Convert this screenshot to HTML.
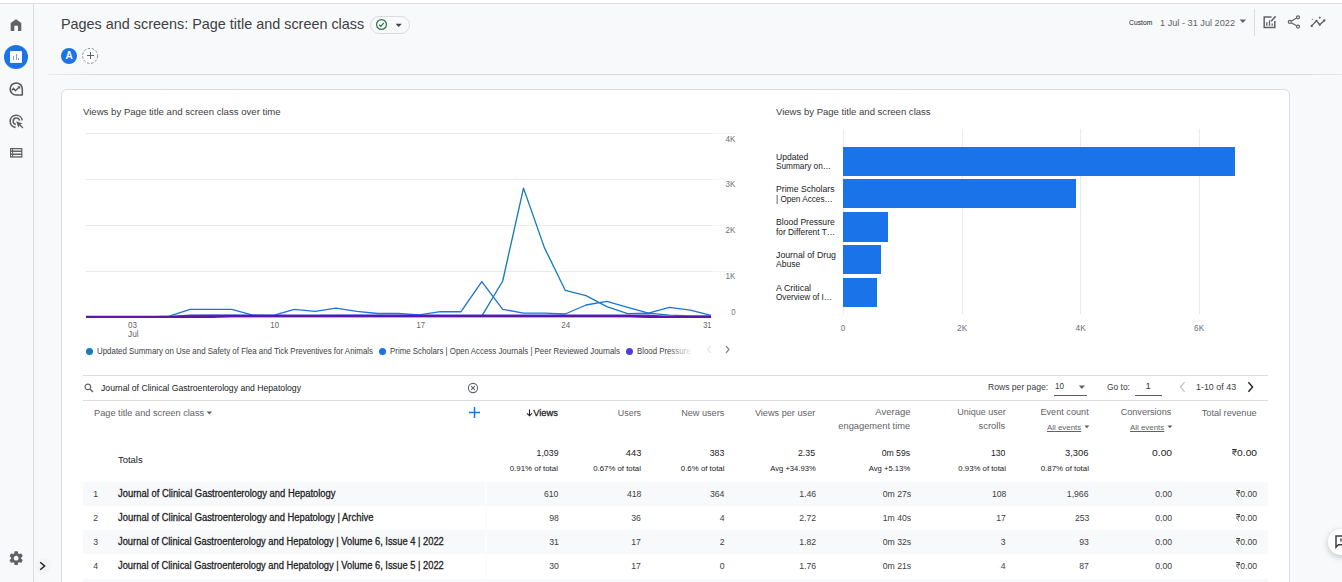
<!DOCTYPE html>
<html>
<head>
<meta charset="utf-8">
<title>Analytics</title>
<style>
*{box-sizing:border-box;margin:0;padding:0}
html,body{width:1342px;height:582px;overflow:hidden;background:#f8f9fa;font-family:"Liberation Sans",sans-serif;color:#3c4043}
.abs{position:absolute}
.t{position:absolute;white-space:nowrap;line-height:1;transform-origin:0 50%}
.r{position:absolute;white-space:nowrap;line-height:1;text-align:right;transform-origin:100% 50%}
#topstrip{left:0;top:0;width:1342px;height:3px;background:#fff}
#topline{left:0;top:3px;width:1342px;height:1px;background:#dadce0}
#nav{left:0;top:4px;width:1342px;height:3px;background:linear-gradient(#fbfbfc,#f8f9fa)}
#navline{left:33px;top:4px;width:1px;height:578px;background:#dadce0}
#hrule{left:48px;top:74px;width:1294px;height:1px;background:linear-gradient(90deg,#eceef0 0,#d6d8db 50px,#d6d8db 1246px,#e6e8ea 1294px)}
#card{left:61px;top:89px;width:1229px;height:520px;background:#fff;border:1px solid #dadce0;border-radius:6px}
.grid{position:absolute;background:#e8eaed}
.row{position:absolute;left:83px;width:1185px;height:24px}
.row.sh{background:#f8f9fa}
.rl{position:absolute;left:83px;width:1185px;height:1px;background:#e8eaed}
</style>
</head>
<body>
<div class="abs" id="topstrip"></div>
<div class="abs" id="topline"></div>
<div class="abs" id="nav"></div>
<div class="abs" id="navline"></div>
<div class="abs" id="hrule"></div>
<div class="abs" id="card"></div>

<!-- HEADER -->
<div id="hdr">
<div class="t" style="left:61.20px;top:17.37px;font-size:14.8px;color:#3c4043;transform:scaleX(0.9726);transform-origin:0 50%;">Pages and screens: Page title and screen class</div>
<div class="abs" style="left:370px;top:16px;width:40px;height:18px;border:1px solid #dadce0;border-radius:9px;background:#f8f9fa"></div>
<svg class="abs" style="left:375px;top:18px" width="13" height="13" viewBox="0 0 13 13"><circle cx="6.5" cy="6.5" r="4.9" fill="none" stroke="#2f7046" stroke-width="1.2"/><path d="M4.1 6.7 L5.8 8.3 L8.9 4.9" fill="none" stroke="#2f7046" stroke-width="1.2"/></svg>
<svg class="abs" style="left:395px;top:23px" width="8" height="5" viewBox="0 0 8 5"><path d="M0.6 0.8 H6.8 L3.7 4 Z" fill="#3c4043"/></svg>
<div class="abs" style="left:61px;top:48px;width:16px;height:16px;border-radius:8px;background:#1a73e8"></div>
<div class="t" style="left:65.38px;top:50.63px;font-size:10px;color:#fff;font-weight:700;">A</div>
<svg class="abs" style="left:81px;top:47px" width="18" height="18" viewBox="0 0 18 18"><circle cx="9.050" cy="8.900" r="7.500" fill="#fcfcfd" stroke="#8a8d91" stroke-width="1" stroke-dasharray="2.500 1.600"/></svg>
<div class="abs" style="left:90px;top:52px;width:1px;height:7px;background:#5f6368"></div><div class="abs" style="left:87px;top:55px;width:7px;height:1px;background:#5f6368"></div>
<div class="t" style="left:1128.70px;top:18.87px;font-size:7px;color:#202124;transform:scaleX(0.9658);transform-origin:0 50%;">Custom</div>
<div class="t" style="left:1159.60px;top:17.56px;font-size:9.5px;color:#5f6368;transform:scaleX(0.9660);transform-origin:0 50%;">1 Jul - 31 Jul 2022</div>
<svg class="abs" style="left:1239px;top:19px" width="8" height="5" viewBox="0 0 8 5"><path d="M0.6 0.6 H7 L3.8 4 Z" fill="#5f6368"/></svg>
<div class="abs" style="left:1254px;top:9px;width:1px;height:27px;background:#dadce0"></div>
<svg class="abs" style="left:1262px;top:14px" width="16" height="16" viewBox="0 0 16 16"><path d="M9.5 3 H2.2 V13.6 H12.8 V7" fill="none" stroke="#5f6368" stroke-width="1.5"/><path d="M4.8 11.8 V8.2 M7.5 11.8 V6.2 M10.2 11.8 V9.4" stroke="#5f6368" stroke-width="1.3" fill="none"/><path d="M9.2 7.2 L13.6 2.2" stroke="#5f6368" stroke-width="1.6" fill="none"/></svg>
<svg class="abs" style="left:1286px;top:14px" width="16" height="16" viewBox="0 0 16 16"><path d="M10.600 4.100 L5.200 7.200 M5.200 8.700 L10.600 11.800" fill="none" stroke="#5f6368" stroke-width="1.200"/><circle cx="12" cy="3.300" r="1.500" fill="none" stroke="#5f6368" stroke-width="1.200"/><circle cx="3.800" cy="7.900" r="1.500" fill="none" stroke="#5f6368" stroke-width="1.200"/><circle cx="12" cy="12.600" r="1.500" fill="none" stroke="#5f6368" stroke-width="1.200"/></svg>
<svg class="abs" style="left:1309px;top:15px" width="18" height="14" viewBox="0 0 18 14"><path d="M2.700 10.900 L7.500 5.800 L10.800 9.700 L15.200 5.500" fill="none" stroke="#5f6368" stroke-width="1.300"/><circle cx="2.700" cy="10.900" r="1.200" fill="#5f6368"/><circle cx="7.500" cy="5.800" r="1.100" fill="#5f6368"/><circle cx="10.800" cy="9.700" r="1.100" fill="#5f6368"/><circle cx="15.200" cy="5.500" r="1.200" fill="#5f6368"/><path d="M10.800 1.300 l.5 1 1 .5 -1 .5 -.5 1 -.5 -1 -1 -.5 1 -.5z" fill="#5f6368"/><circle cx="3.300" cy="4.300" r="0.600" fill="#5f6368"/></svg>
</div><!--/hdr-->
<!-- NAV ICONS -->
<div id="navicons">
<svg class="abs" style="left:10px;top:19px" width="12" height="12" viewBox="0 0 12 12"><path d="M6 0.200 L0.700 4.100 V11.900 H4.300 V6.800 H8 V11.900 H11.300 V4.100 Z" fill="#5f6368"/></svg>
<div class="abs" style="left:4.200px;top:45.100px;width:23.800px;height:23.800px;border-radius:12px;background:#1a73e8"></div>
<div class="abs" style="left:9.700px;top:50.900px;width:12.500px;height:12.400px;border-radius:1px;background:#fff"></div>
<div class="abs" style="left:13px;top:55.700px;width:1px;height:4.200px;background:#7e9fe0"></div><div class="abs" style="left:16px;top:53.800px;width:1px;height:6.100px;background:#7e9fe0"></div><div class="abs" style="left:18.400px;top:58px;width:1px;height:1.800px;background:#7e9fe0"></div>
<svg class="abs" style="left:9px;top:82px" width="15" height="15" viewBox="0 0 15 15"><path d="M13.300 13 H7.200 A6.050 6.050 0 1 1 13.300 6.900 Z" fill="none" stroke="#56595d" stroke-width="1.550" stroke-linejoin="round"/><path d="M2.800 8.400 L4.500 6.400 L6.400 8.700 L9.800 5.400" fill="none" stroke="#56595d" stroke-width="1.400"/><path d="M8.300 4.300 H11.200 V7.200 Z" fill="#56595d"/></svg>
<svg class="abs" style="left:9px;top:113.600px" width="16" height="16" viewBox="0 0 16 16"><path d="M13.3 6.4 A6.1 6.1 0 1 0 6.6 13.4" fill="none" stroke="#5f6368" stroke-width="1.600"/><path d="M10.5 6.6 A3.2 3.2 0 1 0 6.8 10.4" fill="none" stroke="#5f6368" stroke-width="1.600"/><path d="M7.2 7.2 L13.6 9.4 L11.4 10.6 L14.4 13.6 L13.5 14.5 L10.5 11.5 L9.3 13.7 Z" fill="#5f6368"/></svg>
<svg class="abs" style="left:10px;top:148px" width="13" height="10" viewBox="0 0 13 10"><rect x="0" y="0" width="12.4" height="9.6" fill="#5f6368"/><path d="M3.2 1.2 H11.2 V2.6 H3.2Z M3.2 4 H11.2 V5.4 H3.2Z M3.2 6.9 H11.2 V8.3 H3.2Z" fill="#f8f9fa"/><path d="M1.1 1.2 H2.1 V2.6 H1.1Z M1.1 4 H2.1 V5.4 H1.1Z M1.1 6.9 H2.1 V8.3 H1.1Z" fill="#f8f9fa"/></svg>
<svg class="abs" style="left:7.950px;top:549.600px" width="16.300" height="16.300" viewBox="0 0 24 24"><path d="M19.43 12.98c.04-.32.07-.64.07-.98s-.03-.66-.07-.98l2.11-1.65c.19-.15.24-.42.12-.64l-2-3.46c-.12-.22-.39-.3-.61-.22l-2.49 1c-.52-.4-1.08-.73-1.69-.98l-.38-2.65C14.46 2.18 14.25 2 14 2h-4c-.25 0-.46.18-.49.42l-.38 2.65c-.61.25-1.17.59-1.69.98l-2.49-1c-.23-.09-.49 0-.61.22l-2 3.46c-.13.22-.07.49.12.64l2.11 1.65c-.04.32-.07.65-.07.98s.03.66.07.98l-2.11 1.65c-.19.15-.24.42-.12.64l2 3.46c.12.22.39.3.61.22l2.49-1c.52.4 1.08.73 1.69.98l.38 2.65c.03.24.24.42.49.42h4c.25 0 .46-.18.49-.42l.38-2.65c.61-.25 1.17-.59 1.69-.98l2.49 1c.23.09.49 0 .61-.22l2-3.46c.12-.22.07-.49-.12-.64l-2.11-1.65zM12 15.5c-1.93 0-3.500-1.57-3.500-3.500s1.570-3.500 3.500-3.500 3.500 1.570 3.500 3.500-1.570 3.500-3.500 3.500z" fill="#5f6368"/></svg>
<div class="abs" style="left:34.500px;top:558px;width:16px;height:16px;border-radius:8px;background:#f3f4f6"></div>
<svg class="abs" style="left:38px;top:561px" width="9" height="10" viewBox="0 0 9 10"><path d="M2.2 1.2 L6.600 5 L2.2 8.800" fill="none" stroke="#202124" stroke-width="1.5"/></svg>
<div class="abs" style="left:1328px;top:529px;width:26px;height:26px;border-radius:13px;background:#fff;box-shadow:0 2px 6px rgba(60,64,67,.3)"></div>
<svg class="abs" style="left:1335px;top:535px" width="8" height="14" viewBox="0 0 8 14"><path d="M1 1 H8 V9.800 H3.400 L1 12.200 Z" fill="none" stroke="#3c4043" stroke-width="1.5"/><path d="M6 3.500 V6.500" stroke="#3c4043" stroke-width="1.400"/></svg>
</div><!--/navicons-->
<!-- LINE CHART -->
<div id="linechart">
<div class="t" style="left:83.00px;top:106.97px;font-size:9.6px;color:#3c4043;">Views by Page title and screen class over time</div>
<div class="grid" style="left:86px;top:133px;width:626px;height:1px"></div>
<div class="grid" style="left:712px;top:133px;width:24px;height:1px;background:#f3f4f5"></div>
<div class="grid" style="left:86px;top:179px;width:626px;height:1px"></div>
<div class="grid" style="left:712px;top:179px;width:24px;height:1px;background:#f3f4f5"></div>
<div class="grid" style="left:86px;top:225px;width:626px;height:1px"></div>
<div class="grid" style="left:712px;top:225px;width:24px;height:1px;background:#f3f4f5"></div>
<div class="grid" style="left:86px;top:271px;width:626px;height:1px"></div>
<div class="grid" style="left:712px;top:271px;width:24px;height:1px;background:#f3f4f5"></div>
<div class="grid" style="left:86px;top:317px;width:626px;height:1px;background:#dadce0"></div>
<div class="t" style="left:725.15px;top:135.09px;font-size:8.4px;color:#6b6f73;transform:scaleX(0.9561);transform-origin:100% 50%;">4K</div>
<div class="t" style="left:725.15px;top:180.19px;font-size:8.4px;color:#6b6f73;transform:scaleX(0.9561);transform-origin:100% 50%;">3K</div>
<div class="t" style="left:725.15px;top:225.99px;font-size:8.4px;color:#6b6f73;transform:scaleX(0.9561);transform-origin:100% 50%;">2K</div>
<div class="t" style="left:725.15px;top:271.69px;font-size:8.4px;color:#6b6f73;transform:scaleX(0.9561);transform-origin:100% 50%;">1K</div>
<div class="t" style="left:730.53px;top:308.09px;font-size:8.4px;color:#6b6f73;transform:scaleX(0.9204);transform-origin:100% 50%;">0</div>
<div class="t" style="left:128.40px;top:321.49px;font-size:8.4px;color:#5f6368;transform:scaleX(0.9648);transform-origin:0 50%;">03</div>
<div class="t" style="left:128.40px;top:329.69px;font-size:8.4px;color:#5f6368;transform:scaleX(0.9889);transform-origin:0 50%;">Jul</div>
<div class="t" style="left:269.74px;top:321.49px;font-size:8.4px;color:#5f6368;transform:scaleX(0.9434);transform-origin:50% 50%;">10</div>
<div class="t" style="left:415.54px;top:321.49px;font-size:8.4px;color:#5f6368;transform:scaleX(0.9005);transform-origin:50% 50%;">17</div>
<div class="t" style="left:561.44px;top:321.49px;font-size:8.4px;color:#5f6368;transform:scaleX(0.9434);transform-origin:50% 50%;">24</div>
<div class="t" style="left:701.87px;top:321.49px;font-size:8.4px;color:#5f6368;transform:scaleX(0.8791);transform-origin:100% 50%;">31</div>
<svg class="abs" style="left:0;top:120px" width="760" height="210" viewBox="0 120 760 210"><polyline points="86.0,316.9 106.8,316.9 127.7,316.9 148.5,316.9 169.3,316.1 190.2,309.4 211.0,309.4 231.8,309.4 252.7,315.2 273.5,315.4 294.3,309.4 315.2,311.4 336.0,308.1 356.8,311.4 377.7,313.5 398.5,313.5 419.3,314.8 440.2,311.7 461.0,311.7 481.8,281.6 502.7,309.3 523.5,313.1 544.3,313.1 565.2,314.0 586.0,305.0 606.8,301.4 627.7,307.3 648.5,313.1 669.3,307.3 690.2,310.2 711.0,315.4" fill="none" stroke="#1f72e0" stroke-width="1.350" stroke-linejoin="round"/><polyline points="86.0,316.9 106.8,316.9 127.7,316.9 148.5,316.9 169.3,316.9 190.2,315.6 211.0,315.4 231.8,315.4 252.7,315.6 273.5,315.6 294.3,315.6 315.2,315.6 336.0,315.4 356.8,315.4 377.7,315.6 398.5,315.6 419.3,315.6 440.2,315.8 461.0,316.0 481.8,316.2 502.7,281.0 523.5,188.1 544.3,247.4 565.2,290.3 586.0,295.6 606.8,306.7 627.7,313.7 648.5,313.1 669.3,315.2 690.2,315.8 711.0,316.0" fill="none" stroke="#1a7bb9" stroke-width="1.350" stroke-linejoin="round"/><polyline points="86.0,316.9 106.8,316.9 127.7,316.9 148.5,316.9 169.3,316.9 190.2,315.6 211.0,315.6 231.8,315.6 252.7,315.6 273.5,315.6 294.3,315.6 315.2,315.6 336.0,315.6 356.8,315.6 377.7,315.6 398.5,315.6 419.3,315.6 440.2,315.6 461.0,315.6 481.8,315.6 502.7,315.6 523.5,315.6 544.3,315.6 565.2,315.6 586.0,315.6 606.8,315.6 627.7,315.6 648.5,315.6 669.3,316.9 690.2,316.9 711.0,316.9" fill="none" stroke="#3f37c9" stroke-width="2"/><polyline points="86.0,316.9 106.8,316.9 127.7,316.9 148.5,316.9 169.3,316.9 190.2,316.9 211.0,316.9 231.8,316.1 252.7,316.1 273.5,316.1 294.3,316.1 315.2,316.1 336.0,316.1 356.8,316.1 377.7,316.1 398.5,316.1 419.3,316.1 440.2,316.1 461.0,316.1 481.8,316.1 502.7,316.1 523.5,316.1 544.3,316.1 565.2,316.1 586.0,316.1 606.8,316.1 627.7,316.1 648.5,316.9 669.3,316.9 690.2,316.9 711.0,316.9" fill="none" stroke="#5a18a6" stroke-width="2.2"/></svg>
<div class="abs" style="left:86px;top:348px;width:7px;height:7px;border-radius:4px;background:#1a7bb9"></div>
<div class="t" style="left:96.70px;top:346.68px;font-size:9px;color:#3c4043;transform:scaleX(0.8785);transform-origin:0 50%;">Updated Summary on Use and Safety of Flea and Tick Preventives for Animals</div>
<div class="abs" style="left:379.3px;top:348px;width:7px;height:7px;border-radius:4px;background:#1a73e8"></div>
<div class="t" style="left:389.80px;top:346.68px;font-size:9px;color:#3c4043;transform:scaleX(0.8752);transform-origin:0 50%;">Prime Scholars | Open Access Journals | Peer Reviewed Journals</div>
<div class="abs" style="left:626.4px;top:348px;width:7px;height:7px;border-radius:4px;background:#4a3fd6"></div>
<div class="t" style="left:637.30px;top:346.68px;font-size:9px;color:#3c4043;transform:scaleX(0.8693);transform-origin:0 50%;">Blood Pressure</div>
<div class="abs" style="left:668px;top:344px;width:30px;height:14px;background:linear-gradient(90deg,rgba(255,255,255,0),#fff 85%)"></div>
<svg class="abs" style="left:706px;top:345px" width="7" height="9" viewBox="0 0 7 9"><path d="M4.800 1 L1.800 4.500 L4.800 8" fill="none" stroke="#dadce0" stroke-width="1.100"/></svg>
<svg class="abs" style="left:724px;top:345px" width="7" height="9" viewBox="0 0 7 9"><path d="M2 1 L5 4.500 L2 8" fill="none" stroke="#80868b" stroke-width="1.200"/></svg>
</div><!--/linechart-->
<!-- BAR CHART -->
<div id="barchart">
<div class="t" style="left:776.20px;top:106.77px;font-size:9.6px;color:#3c4043;transform:scaleX(0.9939);transform-origin:0 50%;">Views by Page title and screen class</div>
<div class="grid" style="left:843px;top:129px;width:1px;height:185px"></div>
<div class="grid" style="left:961.6px;top:129px;width:1px;height:185px"></div>
<div class="grid" style="left:1080.2px;top:129px;width:1px;height:185px"></div>
<div class="grid" style="left:1198.7px;top:129px;width:1px;height:185px"></div>
<div class="abs" style="left:843px;top:147px;width:392.0px;height:28.8px;background:#1a73e8"></div>
<div class="abs" style="left:843px;top:179.1px;width:233.3px;height:29.4px;background:#1a73e8"></div>
<div class="abs" style="left:843px;top:212.1px;width:45.0px;height:29.6px;background:#1a73e8"></div>
<div class="abs" style="left:843px;top:244.9px;width:38.0px;height:28.9px;background:#1a73e8"></div>
<div class="abs" style="left:843px;top:278px;width:34.0px;height:28.7px;background:#1a73e8"></div>
<div class="t" style="left:776.20px;top:152.81px;font-size:9.2px;color:#202124;transform:scaleX(0.9324);transform-origin:0 50%;">Updated</div>
<div class="t" style="left:776.20px;top:161.91px;font-size:9.2px;color:#202124;transform:scaleX(0.8975);transform-origin:0 50%;">Summary on…</div>
<div class="t" style="left:776.20px;top:185.11px;font-size:9.2px;color:#202124;transform:scaleX(0.9391);transform-origin:0 50%;">Prime Scholars</div>
<div class="t" style="left:776.20px;top:195.01px;font-size:9.2px;color:#202124;transform:scaleX(0.8905);transform-origin:0 50%;">| Open Acces…</div>
<div class="t" style="left:776.20px;top:217.71px;font-size:9.2px;color:#202124;transform:scaleX(0.9359);transform-origin:0 50%;">Blood Pressure</div>
<div class="t" style="left:776.20px;top:227.71px;font-size:9.2px;color:#202124;transform:scaleX(0.9103);transform-origin:0 50%;">for Different T…</div>
<div class="t" style="left:776.20px;top:250.91px;font-size:9.2px;color:#202124;transform:scaleX(0.9534);transform-origin:0 50%;">Journal of Drug</div>
<div class="t" style="left:776.20px;top:259.61px;font-size:9.2px;color:#202124;transform:scaleX(0.9285);transform-origin:0 50%;">Abuse</div>
<div class="t" style="left:776.20px;top:283.91px;font-size:9.2px;color:#202124;transform:scaleX(0.9683);transform-origin:0 50%;">A Critical</div>
<div class="t" style="left:776.20px;top:292.81px;font-size:9.2px;color:#202124;transform:scaleX(0.8918);transform-origin:0 50%;">Overview of I…</div>
<div class="t" style="left:840.69px;top:323.87px;font-size:8.3px;color:#6b6f73;">0</div>
<div class="t" style="left:957.12px;top:323.87px;font-size:8.3px;color:#6b6f73;">2K</div>
<div class="t" style="left:1075.52px;top:323.87px;font-size:8.3px;color:#6b6f73;">4K</div>
<div class="t" style="left:1194.12px;top:323.87px;font-size:8.3px;color:#6b6f73;">6K</div>
</div><!--/barchart-->
<!-- TABLE -->
<div id="table">
<div class="rl" style="top:375px;background:#dadce0"></div>
<div class="rl" style="top:400px;background:#dadce0"></div>
<svg class="abs" style="left:84px;top:383px" width="10" height="10" viewBox="0 0 10 10"><circle cx="3.900" cy="3.900" r="2.800" fill="none" stroke="#5f6368" stroke-width="1.200"/><path d="M6 6 L9 9" stroke="#5f6368" stroke-width="1.400"/></svg>
<div class="t" style="left:100.70px;top:383.17px;font-size:9.6px;color:#202124;transform:scaleX(0.9015);transform-origin:0 50%;">Journal of Clinical Gastroenterology and Hepatology</div>
<svg class="abs" style="left:467px;top:382px" width="12" height="12" viewBox="0 0 12 12"><circle cx="6" cy="6" r="4.600" fill="none" stroke="#5f6368" stroke-width="1.100"/><path d="M4.100 4.100 L7.900 7.900 M7.900 4.100 L4.100 7.900" stroke="#5f6368" stroke-width="1.100"/></svg>
<div class="t" style="left:988.30px;top:382.27px;font-size:9.6px;color:#3c4043;transform:scaleX(0.8943);transform-origin:0 50%;">Rows per page:</div>
<div class="t" style="left:1054.60px;top:381.37px;font-size:9.6px;color:#3c4043;transform:scaleX(0.8527);transform-origin:0 50%;">10</div>
<div class="abs" style="left:1054px;top:394.500px;width:33px;height:1px;background:#5f6368"></div>
<svg class="abs" style="left:1078px;top:384.500px" width="8" height="5" viewBox="0 0 8 5"><path d="M0.800 0.600 H7 L3.900 4 Z" fill="#5f6368"/></svg>
<div class="t" style="left:1106.60px;top:382.27px;font-size:9.6px;color:#3c4043;transform:scaleX(0.8760);transform-origin:0 50%;">Go to:</div>
<div class="t" style="left:1145.53px;top:381.37px;font-size:9.6px;color:#3c4043;">1</div>
<div class="abs" style="left:1135px;top:394.500px;width:27px;height:1px;background:#5f6368"></div>
<svg class="abs" style="left:1178px;top:381px" width="9" height="12" viewBox="0 0 9 12"><path d="M6.600 1.200 L2.400 6 L6.600 10.800" fill="none" stroke="#bdc1c6" stroke-width="1.200"/></svg>
<div class="t" style="left:1196.40px;top:382.27px;font-size:9.6px;color:#3c4043;transform:scaleX(0.9278);transform-origin:0 50%;">1-10 of 43</div>
<svg class="abs" style="left:1246px;top:381px" width="9" height="12" viewBox="0 0 9 12"><path d="M2.400 1.200 L6.600 6 L2.400 10.800" fill="none" stroke="#202124" stroke-width="1.400"/></svg>
<div class="t" style="left:94.10px;top:408.07px;font-size:9.6px;color:#5f6368;transform:scaleX(0.9610);transform-origin:0 50%;">Page title and screen class</div>
<svg class="abs" style="left:206px;top:410.500px" width="7" height="4" viewBox="0 0 7 4"><path d="M0.600 0.400 H6.200 L3.400 3.400 Z" fill="#5f6368"/></svg>
<svg class="abs" style="left:468px;top:406px" width="13" height="13" viewBox="0 0 13 13"><path d="M6.500 1 V12 M1 6.500 H12" stroke="#1a73e8" stroke-width="1.500"/></svg>
<svg class="abs" style="left:526px;top:408.500px" width="7" height="8" viewBox="0 0 7 8"><path d="M3.500 0.500 V6.600 M1 4.300 L3.500 6.800 L6 4.300" fill="none" stroke="#202124" stroke-width="1.100"/></svg>
<div class="t" style="left:532.23px;top:407.90px;font-size:9.8px;color:#202124;transform:scaleX(0.9550);transform-origin:100% 50%;-webkit-text-stroke:0.28px #202124;">Views</div>
<div class="t" style="left:615.94px;top:408.07px;font-size:9.6px;color:#5f6368;transform:scaleX(0.9257);transform-origin:100% 50%;">Users</div>
<div class="t" style="left:678.67px;top:408.07px;font-size:9.6px;color:#5f6368;transform:scaleX(0.9531);transform-origin:100% 50%;">New users</div>
<div class="t" style="left:752.22px;top:408.07px;font-size:9.6px;color:#5f6368;transform:scaleX(0.9545);transform-origin:100% 50%;">Views per user</div>
<div class="t" style="left:874.84px;top:407.17px;font-size:9.6px;color:#5f6368;transform:scaleX(0.9926);transform-origin:100% 50%;">Average</div>
<div class="t" style="left:953.77px;top:407.17px;font-size:9.6px;color:#5f6368;transform:scaleX(0.9375);transform-origin:100% 50%;">Unique user</div>
<div class="t" style="left:1037.93px;top:407.17px;font-size:9.6px;color:#5f6368;transform:scaleX(0.9512);transform-origin:100% 50%;">Event count</div>
<div class="t" style="left:1118.27px;top:407.17px;font-size:9.6px;color:#5f6368;transform:scaleX(0.9507);transform-origin:100% 50%;">Conversions</div>
<div class="t" style="left:1199.39px;top:408.07px;font-size:9.6px;color:#5f6368;transform:scaleX(0.9512);transform-origin:100% 50%;">Total revenue</div>
<div class="t" style="left:836.26px;top:421.27px;font-size:9.6px;color:#5f6368;transform:scaleX(0.9684);transform-origin:100% 50%;">engagement time</div>
<div class="t" style="left:978.31px;top:421.27px;font-size:9.6px;color:#5f6368;transform:scaleX(0.9821);transform-origin:100% 50%;">scrolls</div>
<div class="t" style="left:1046.50px;top:423.63px;font-size:8px;color:#5f6368;transform:scaleX(0.9859);transform-origin:0 50%;text-decoration:underline;">All events</div>
<svg class="abs" style="left:1083.5px;top:425px" width="6" height="4" viewBox="0 0 6 4"><path d="M0.400 0.400 H5.400 L2.900 3.200 Z" fill="#5f6368"/></svg>
<div class="t" style="left:1129.50px;top:423.63px;font-size:8px;color:#5f6368;transform:scaleX(0.9859);transform-origin:0 50%;text-decoration:underline;">All events</div>
<svg class="abs" style="left:1166.5px;top:425px" width="6" height="4" viewBox="0 0 6 4"><path d="M0.400 0.400 H5.400 L2.900 3.200 Z" fill="#5f6368"/></svg>
<div class="t" style="left:118.20px;top:455.17px;font-size:9.6px;color:#202124;transform:scaleX(0.9855);transform-origin:0 50%;">Totals</div>
<div class="t" style="left:533.67px;top:447.90px;font-size:9.8px;color:#202124;transform:scaleX(0.8968);transform-origin:100% 50%;">1,039</div>
<div class="t" style="left:624.64px;top:447.90px;font-size:9.8px;color:#202124;transform:scaleX(0.9475);transform-origin:100% 50%;">443</div>
<div class="t" style="left:707.64px;top:447.90px;font-size:9.8px;color:#202124;transform:scaleX(0.8925);transform-origin:100% 50%;">383</div>
<div class="t" style="left:796.42px;top:447.90px;font-size:9.8px;color:#202124;transform:scaleX(0.9016);transform-origin:100% 50%;">2.35</div>
<div class="t" style="left:878.26px;top:447.90px;font-size:9.8px;color:#202124;transform:scaleX(0.8867);transform-origin:100% 50%;">0m 59s</div>
<div class="t" style="left:989.14px;top:447.90px;font-size:9.8px;color:#202124;transform:scaleX(0.8802);transform-origin:100% 50%;">130</div>
<div class="t" style="left:1064.07px;top:447.90px;font-size:9.8px;color:#202124;transform:scaleX(0.9580);transform-origin:100% 50%;">3,306</div>
<div class="t" style="left:1152.52px;top:447.90px;font-size:9.8px;color:#202124;transform:scaleX(1.0483);transform-origin:100% 50%;">0.00</div>
<div class="t" style="left:1237.92px;top:447.90px;font-size:9.8px;color:#202124;transform:scaleX(1.0483);transform-origin:100% 50%;">0.00</div>
<svg class="abs" style="left:1231.70px;top:449.40px" width="5" height="6.8" viewBox="0 0 10 14" preserveAspectRatio="none"><path d="M0.800 1 H9.400 M0.800 4.600 H9.400 M0.800 1 H3.400 C8.400 1 8.400 8.200 3.400 8.200 H1 L7.200 13.600" fill="none" stroke="#202124" stroke-width="1.8"/></svg>
<div class="t" style="left:509.28px;top:464.63px;font-size:8px;color:#202124;transform:scaleX(0.9852);transform-origin:100% 50%;">0.91% of total</div>
<div class="t" style="left:592.08px;top:464.63px;font-size:8px;color:#202124;transform:scaleX(0.9750);transform-origin:100% 50%;">0.67% of total</div>
<div class="t" style="left:679.52px;top:464.63px;font-size:8px;color:#202124;transform:scaleX(0.9824);transform-origin:100% 50%;">0.6% of total</div>
<div class="t" style="left:767.83px;top:464.63px;font-size:8px;color:#202124;transform:scaleX(0.9523);transform-origin:100% 50%;">Avg +34.93%</div>
<div class="t" style="left:867.18px;top:464.63px;font-size:8px;color:#202124;transform:scaleX(0.9602);transform-origin:100% 50%;">Avg +5.13%</div>
<div class="t" style="left:956.58px;top:464.63px;font-size:8px;color:#202124;transform:scaleX(0.9730);transform-origin:100% 50%;">0.93% of total</div>
<div class="t" style="left:1039.68px;top:464.63px;font-size:8px;color:#202124;transform:scaleX(0.9852);transform-origin:100% 50%;">0.87% of total</div>
<div class="row sh" style="top:482.30px;height:24.05px"></div>
<div class="t" style="left:93.27px;top:489.00px;font-size:9.8px;color:#3c4043;transform:scaleX(0.8850);transform-origin:50% 50%;">1</div>
<div class="t" style="left:118.20px;top:488.83px;font-size:10px;color:#202124;transform:scaleX(0.9405);transform-origin:0 50%;-webkit-text-stroke:0.28px #202124;">Journal of Clinical Gastroenterology and Hepatology</div>
<div class="t" style="left:542.24px;top:489.00px;font-size:9.8px;color:#3c4043;transform:scaleX(0.8850);transform-origin:100% 50%;">610</div>
<div class="t" style="left:625.04px;top:489.00px;font-size:9.8px;color:#3c4043;transform:scaleX(0.8850);transform-origin:100% 50%;">418</div>
<div class="t" style="left:708.04px;top:489.00px;font-size:9.8px;color:#3c4043;transform:scaleX(0.8850);transform-origin:100% 50%;">364</div>
<div class="t" style="left:796.82px;top:489.00px;font-size:9.8px;color:#3c4043;transform:scaleX(0.8850);transform-origin:100% 50%;">1.46</div>
<div class="t" style="left:878.66px;top:489.00px;font-size:9.8px;color:#3c4043;transform:scaleX(0.8850);transform-origin:100% 50%;">0m 27s</div>
<div class="t" style="left:989.54px;top:489.00px;font-size:9.8px;color:#3c4043;transform:scaleX(0.8850);transform-origin:100% 50%;">108</div>
<div class="t" style="left:1064.47px;top:489.00px;font-size:9.8px;color:#3c4043;transform:scaleX(0.8850);transform-origin:100% 50%;">1,966</div>
<div class="t" style="left:1152.92px;top:489.00px;font-size:9.8px;color:#3c4043;transform:scaleX(0.8850);transform-origin:100% 50%;">0.00</div>
<div class="t" style="left:1238.32px;top:489.00px;font-size:9.8px;color:#3c4043;transform:scaleX(0.8850);transform-origin:100% 50%;">0.00</div>
<svg class="abs" style="left:1236.10px;top:490.30px" width="4.4" height="7" viewBox="0 0 10 14" preserveAspectRatio="none"><path d="M0.800 1 H9.400 M0.800 4.600 H9.400 M0.800 1 H3.400 C8.400 1 8.400 8.200 3.400 8.200 H1 L7.200 13.600" fill="none" stroke="#3c4043" stroke-width="1.9"/></svg>
<div class="t" style="left:93.27px;top:513.05px;font-size:9.8px;color:#3c4043;transform:scaleX(0.8850);transform-origin:50% 50%;">2</div>
<div class="t" style="left:118.20px;top:512.88px;font-size:10px;color:#202124;transform:scaleX(0.9383);transform-origin:0 50%;-webkit-text-stroke:0.28px #202124;">Journal of Clinical Gastroenterology and Hepatology | Archive</div>
<div class="t" style="left:547.69px;top:513.05px;font-size:9.8px;color:#3c4043;transform:scaleX(0.8850);transform-origin:100% 50%;">98</div>
<div class="t" style="left:630.49px;top:513.05px;font-size:9.8px;color:#3c4043;transform:scaleX(0.8850);transform-origin:100% 50%;">36</div>
<div class="t" style="left:718.95px;top:513.05px;font-size:9.8px;color:#3c4043;transform:scaleX(0.8850);transform-origin:100% 50%;">4</div>
<div class="t" style="left:796.82px;top:513.05px;font-size:9.8px;color:#3c4043;transform:scaleX(0.8850);transform-origin:100% 50%;">2.72</div>
<div class="t" style="left:878.66px;top:513.05px;font-size:9.8px;color:#3c4043;transform:scaleX(0.8850);transform-origin:100% 50%;">1m 40s</div>
<div class="t" style="left:994.99px;top:513.05px;font-size:9.8px;color:#3c4043;transform:scaleX(0.8850);transform-origin:100% 50%;">17</div>
<div class="t" style="left:1072.64px;top:513.05px;font-size:9.8px;color:#3c4043;transform:scaleX(0.8850);transform-origin:100% 50%;">253</div>
<div class="t" style="left:1152.92px;top:513.05px;font-size:9.8px;color:#3c4043;transform:scaleX(0.8850);transform-origin:100% 50%;">0.00</div>
<div class="t" style="left:1238.32px;top:513.05px;font-size:9.8px;color:#3c4043;transform:scaleX(0.8850);transform-origin:100% 50%;">0.00</div>
<svg class="abs" style="left:1236.10px;top:514.35px" width="4.4" height="7" viewBox="0 0 10 14" preserveAspectRatio="none"><path d="M0.800 1 H9.400 M0.800 4.600 H9.400 M0.800 1 H3.400 C8.400 1 8.400 8.200 3.400 8.200 H1 L7.200 13.600" fill="none" stroke="#3c4043" stroke-width="1.9"/></svg>
<div class="row sh" style="top:530.40px;height:24.05px"></div>
<div class="t" style="left:93.27px;top:537.10px;font-size:9.8px;color:#3c4043;transform:scaleX(0.8850);transform-origin:50% 50%;">3</div>
<div class="t" style="left:118.20px;top:536.93px;font-size:10px;color:#202124;transform:scaleX(0.9327);transform-origin:0 50%;-webkit-text-stroke:0.28px #202124;">Journal of Clinical Gastroenterology and Hepatology | Volume 6, Issue 4 | 2022</div>
<div class="t" style="left:547.69px;top:537.10px;font-size:9.8px;color:#3c4043;transform:scaleX(0.8850);transform-origin:100% 50%;">31</div>
<div class="t" style="left:630.49px;top:537.10px;font-size:9.8px;color:#3c4043;transform:scaleX(0.8850);transform-origin:100% 50%;">17</div>
<div class="t" style="left:718.95px;top:537.10px;font-size:9.8px;color:#3c4043;transform:scaleX(0.8850);transform-origin:100% 50%;">2</div>
<div class="t" style="left:796.82px;top:537.10px;font-size:9.8px;color:#3c4043;transform:scaleX(0.8850);transform-origin:100% 50%;">1.82</div>
<div class="t" style="left:878.66px;top:537.10px;font-size:9.8px;color:#3c4043;transform:scaleX(0.8850);transform-origin:100% 50%;">0m 32s</div>
<div class="t" style="left:1000.45px;top:537.10px;font-size:9.8px;color:#3c4043;transform:scaleX(0.8850);transform-origin:100% 50%;">3</div>
<div class="t" style="left:1078.09px;top:537.10px;font-size:9.8px;color:#3c4043;transform:scaleX(0.8850);transform-origin:100% 50%;">93</div>
<div class="t" style="left:1152.92px;top:537.10px;font-size:9.8px;color:#3c4043;transform:scaleX(0.8850);transform-origin:100% 50%;">0.00</div>
<div class="t" style="left:1238.32px;top:537.10px;font-size:9.8px;color:#3c4043;transform:scaleX(0.8850);transform-origin:100% 50%;">0.00</div>
<svg class="abs" style="left:1236.10px;top:538.40px" width="4.4" height="7" viewBox="0 0 10 14" preserveAspectRatio="none"><path d="M0.800 1 H9.400 M0.800 4.600 H9.400 M0.800 1 H3.400 C8.400 1 8.400 8.200 3.400 8.200 H1 L7.200 13.600" fill="none" stroke="#3c4043" stroke-width="1.9"/></svg>
<div class="t" style="left:93.27px;top:561.15px;font-size:9.8px;color:#3c4043;transform:scaleX(0.8850);transform-origin:50% 50%;">4</div>
<div class="t" style="left:118.20px;top:560.98px;font-size:10px;color:#202124;transform:scaleX(0.9327);transform-origin:0 50%;-webkit-text-stroke:0.28px #202124;">Journal of Clinical Gastroenterology and Hepatology | Volume 6, Issue 5 | 2022</div>
<div class="t" style="left:547.69px;top:561.15px;font-size:9.8px;color:#3c4043;transform:scaleX(0.8850);transform-origin:100% 50%;">30</div>
<div class="t" style="left:630.49px;top:561.15px;font-size:9.8px;color:#3c4043;transform:scaleX(0.8850);transform-origin:100% 50%;">17</div>
<div class="t" style="left:718.95px;top:561.15px;font-size:9.8px;color:#3c4043;transform:scaleX(0.8850);transform-origin:100% 50%;">0</div>
<div class="t" style="left:796.82px;top:561.15px;font-size:9.8px;color:#3c4043;transform:scaleX(0.8850);transform-origin:100% 50%;">1.76</div>
<div class="t" style="left:878.66px;top:561.15px;font-size:9.8px;color:#3c4043;transform:scaleX(0.8850);transform-origin:100% 50%;">0m 21s</div>
<div class="t" style="left:1000.45px;top:561.15px;font-size:9.8px;color:#3c4043;transform:scaleX(0.8850);transform-origin:100% 50%;">4</div>
<div class="t" style="left:1078.09px;top:561.15px;font-size:9.8px;color:#3c4043;transform:scaleX(0.8850);transform-origin:100% 50%;">87</div>
<div class="t" style="left:1152.92px;top:561.15px;font-size:9.8px;color:#3c4043;transform:scaleX(0.8850);transform-origin:100% 50%;">0.00</div>
<div class="t" style="left:1238.32px;top:561.15px;font-size:9.8px;color:#3c4043;transform:scaleX(0.8850);transform-origin:100% 50%;">0.00</div>
<svg class="abs" style="left:1236.10px;top:562.45px" width="4.4" height="7" viewBox="0 0 10 14" preserveAspectRatio="none"><path d="M0.800 1 H9.400 M0.800 4.600 H9.400 M0.800 1 H3.400 C8.400 1 8.400 8.200 3.400 8.200 H1 L7.200 13.600" fill="none" stroke="#3c4043" stroke-width="1.9"/></svg>
<div class="row sh" style="top:578.5px;height:6px"></div>
<div class="abs" style="left:485px;top:482px;width:1.500px;height:100px;background:#fbfcfc"></div>
</div><!--/table-->
</body>
</html>
